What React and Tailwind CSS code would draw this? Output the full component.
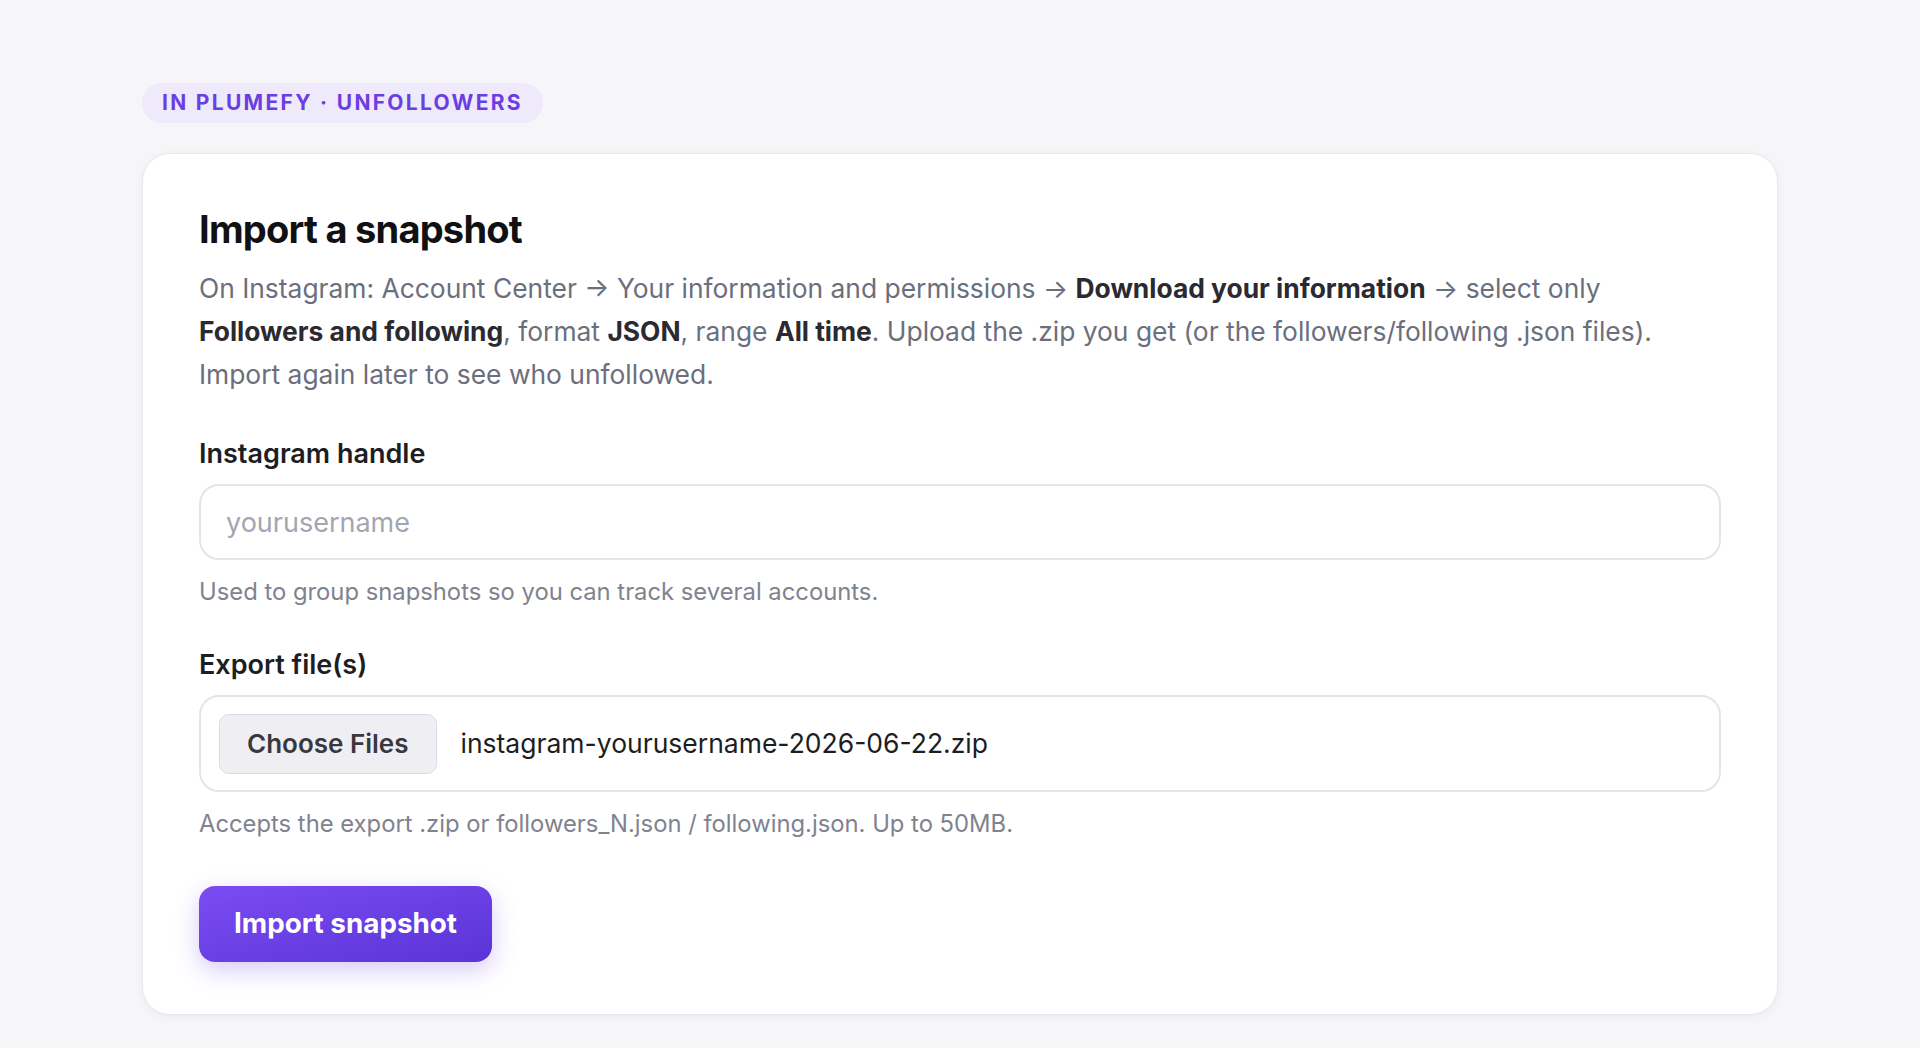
import { useState } from "react";

function Field({ label, hint, children }) {
  return (
    <div className="flex flex-col">
      <label className="text-[27px] font-semibold leading-[38px] text-[#1d1d22]">{label}</label>
      <div className="mt-[11px]">{children}</div>
      <p className="mt-[16px] text-[23.8px] leading-[32px] text-[#80838f]">{hint}</p>
    </div>
  );
}

export default function App() {
  const [handle, setHandle] = useState("");

  return (
    <div
      className="min-h-[1048px] w-full bg-[#f6f6f9] px-[142px] pt-[83px] pb-[34px]"
      style={{ fontFamily: "Inter, 'Noto Sans', sans-serif" }}
    >
      {/* SECTION TAG */}
      <div className="inline-flex h-[40px] items-center rounded-full bg-[#efe9fc] px-[20px] text-[21px] font-bold uppercase tracking-[0.11em] text-[#6a3ee2]">
        In Plumefy · Unfollowers
      </div>

      {/* CARD */}
      <div className="mt-[30px] rounded-[28px] border border-[#e8e8ee] bg-white px-[56px] pt-[53px] pb-[52px] shadow-[0_2px_8px_rgba(20,20,40,0.05)]">
        <h1 className="text-[38px] font-bold leading-[44px] tracking-[-0.02em] text-[#111114]">Import a snapshot</h1>
        <p className="mt-[16px] text-[26.4px] leading-[43px] text-[#6b6f7d]">
          On Instagram: Account Center → Your information and permissions →{" "}
          <strong className="font-bold text-[#2a2a30]">Download your information</strong> → select only{" "}
          <strong className="font-bold text-[#2a2a30]">Followers and following</strong>, format{" "}
          <strong className="font-bold text-[#2a2a30]">JSON</strong>, range{" "}
          <strong className="font-bold text-[#2a2a30]">All time</strong>. Upload the .zip you get (or the
          followers/following .json files). Import again later to see who unfollowed.
        </p>

        <div className="mt-[39px] flex flex-col gap-[38px]">
          <Field label="Instagram handle" hint="Used to group snapshots so you can track several accounts.">
            <input
              value={handle}
              onChange={(e) => setHandle(e.target.value)}
              placeholder="yourusername"
              className="h-[76px] w-full rounded-[20px] border-2 border-[#e4e4ea] bg-white px-[25px] text-[27px] text-[#1d1d22] outline-none placeholder:text-[#a3a6b0]"
            />
          </Field>

          <Field label="Export file(s)" hint="Accepts the export .zip or followers_N.json / following.json. Up to 50MB.">
            <div className="flex h-[97px] w-full items-center gap-[24px] rounded-[20px] border-2 border-[#e4e4ea] bg-white px-[18px]">
              <button className="h-[60px] rounded-[10px] border border-[#dcdce3] bg-[#efeff3] px-[27px] text-[26px] font-semibold text-[#38383f]">
                Choose Files
              </button>
              <span className="text-[26.5px] text-[#1d1d22]">instagram-yourusername-2026-06-22.zip</span>
            </div>
          </Field>
        </div>

        <button className="mt-[46px] h-[76px] rounded-[16px] bg-gradient-to-br from-[#7b4cf2] to-[#5a33d6] px-[35px] text-[27.8px] font-bold text-white shadow-[0_8px_24px_rgba(110,66,230,0.28)]">
          Import snapshot
        </button>
      </div>
    </div>
  );
}
